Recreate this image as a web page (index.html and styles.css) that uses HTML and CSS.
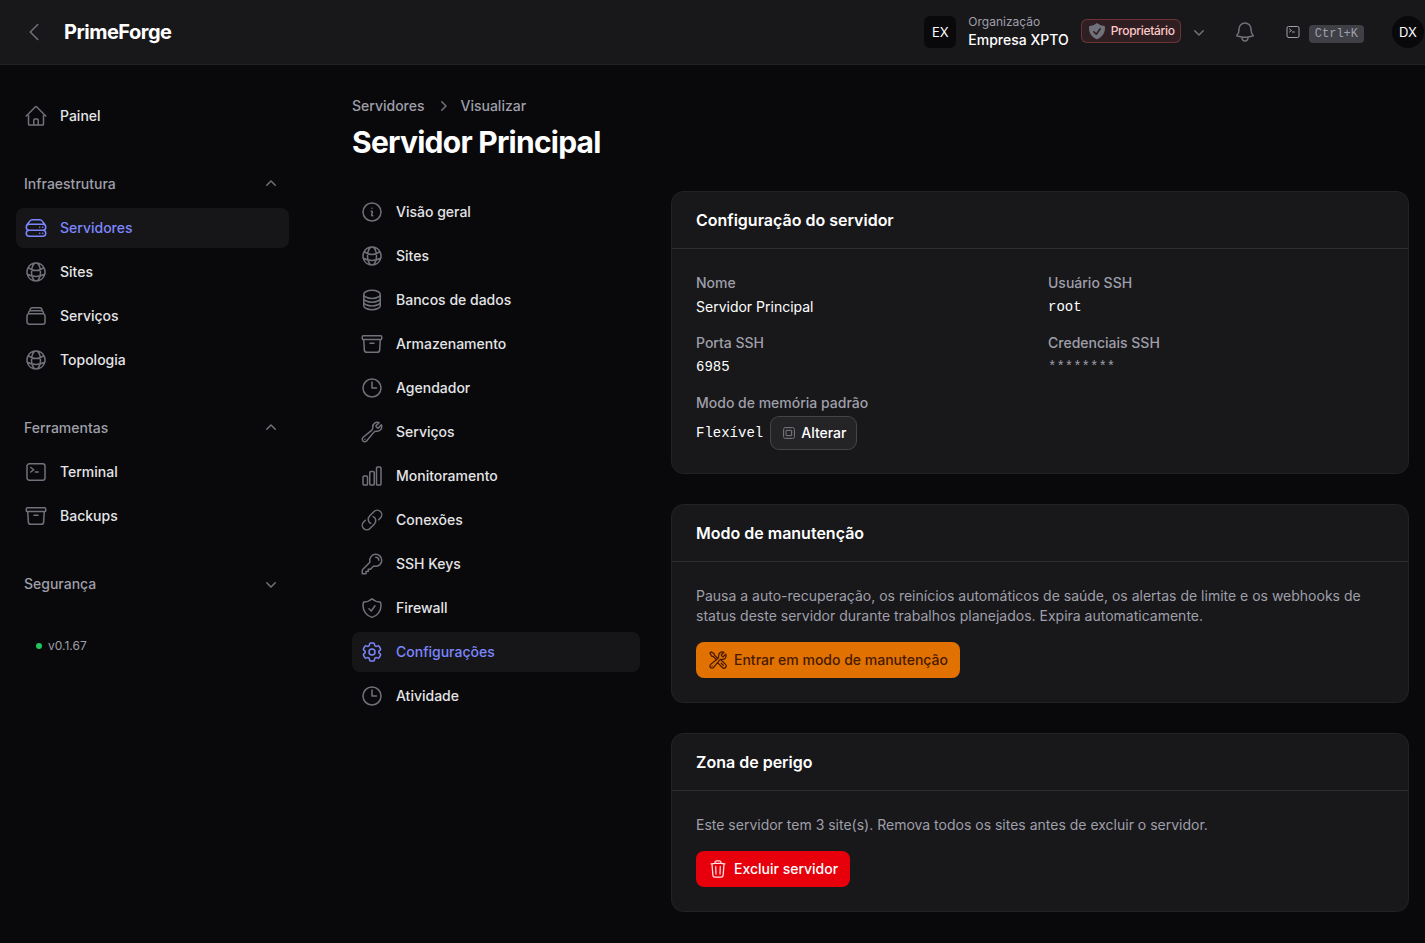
FILE: index.html
```html
<!DOCTYPE html>
<html lang="pt-BR">
  <head>
    <meta charset="utf-8">
    <title>Servidor Principal - PrimeForge</title>
    <link rel="stylesheet" href="styles.css">
  </head>
  <body>

    <!-- icons -->
    <svg class="sprite" xmlns="http://www.w3.org/2000/svg">
      <symbol id="back" viewBox="0 0 24 24"><path d="M15.75 19.5 8.25 12l7.5-7.5"/></symbol>
      <symbol id="home" viewBox="0 0 24 24"><path d="m2.25 12 8.954-8.955c.44-.439 1.152-.439 1.591 0L21.75 12M4.5 9.75v10.125c0 .621.504 1.125 1.125 1.125H9.75v-4.875c0-.621.504-1.125 1.125-1.125h2.25c.621 0 1.125.504 1.125 1.125V21h4.125c.621 0 1.125-.504 1.125-1.125V9.75M8.25 21h8.25"/></symbol>
      <symbol id="server" viewBox="0 0 24 24"><path d="M5.25 14.25h13.5m-13.5 0a3 3 0 0 1-3-3m3 3a3 3 0 1 0 0 6h13.5a3 3 0 1 0 0-6m-16.5-3a3 3 0 0 1 3-3h13.5a3 3 0 0 1 3 3m-19.5 0a4.5 4.5 0 0 1 .9-2.7L5.737 5.1a3.375 3.375 0 0 1 2.7-1.35h7.126c1.062 0 2.062.5 2.7 1.35l2.587 3.45a4.5 4.5 0 0 1 .9 2.7m0 0a3 3 0 0 1-3 3m0 3h.008v.008h-.008v-.008Zm0-6h.008v.008h-.008v-.008Zm-3 6h.008v.008h-.008v-.008Zm0-6h.008v.008h-.008v-.008Z"/></symbol>
      <symbol id="globe" viewBox="0 0 24 24"><path d="M12 21a9.004 9.004 0 0 0 8.716-6.747M12 21a9.004 9.004 0 0 1-8.716-6.747M12 21c2.485 0 4.5-4.03 4.5-9S14.485 3 12 3m0 18c-2.485 0-4.5-4.03-4.5-9S9.515 3 12 3m0 0a8.997 8.997 0 0 1 7.843 4.582M12 3a8.997 8.997 0 0 0-7.843 4.582m15.686 0A11.953 11.953 0 0 1 12 10.5c-2.998 0-5.74-1.1-7.843-2.918m15.686 0A8.959 8.959 0 0 1 21 12c0 .778-.099 1.533-.284 2.253m0 0A17.919 17.919 0 0 1 12 16.5c-3.162 0-6.133-.815-8.716-2.247m0 0A9.015 9.015 0 0 1 3 12c0-1.605.42-3.113 1.157-4.418"/></symbol>
      <symbol id="stack" viewBox="0 0 24 24"><path d="M6 6.878V6a2.25 2.25 0 0 1 2.25-2.25h7.5A2.25 2.25 0 0 1 18 6v.878m-12 0c.235-.083.487-.128.75-.128h10.5c.263 0 .515.045.75.128m-12 0A2.25 2.25 0 0 0 4.5 9v.878m13.5-3A2.25 2.25 0 0 1 19.5 9v.878m0 0a2.246 2.246 0 0 0-.75-.128H5.25c-.263 0-.515.045-.75.128m15 0A2.25 2.25 0 0 1 21 12v6a2.25 2.25 0 0 1-2.25 2.25H5.25A2.25 2.25 0 0 1 3 18v-6c0-.98.626-1.813 1.5-2.122"/></symbol>
      <symbol id="terminal" viewBox="0 0 24 24"><path d="m6.75 7.5 3 2.25-3 2.25m4.5 0h3m-9 8.25h13.5A2.25 2.25 0 0 0 21 18V6a2.25 2.25 0 0 0-2.25-2.25H5.25A2.25 2.25 0 0 0 3 6v12a2.25 2.25 0 0 0 2.25 2.25Z"/></symbol>
      <symbol id="archive" viewBox="0 0 24 24"><path d="m20.25 7.5-.625 10.632a2.25 2.25 0 0 1-2.247 2.118H6.622a2.25 2.25 0 0 1-2.247-2.118L3.75 7.5M10 11.25h4M3.375 7.5h17.25c.621 0 1.125-.504 1.125-1.125v-1.5c0-.621-.504-1.125-1.125-1.125H3.375c-.621 0-1.125.504-1.125 1.125v1.5c0 .621.504 1.125 1.125 1.125Z"/></symbol>
      <symbol id="info" viewBox="0 0 24 24"><path d="m11.25 11.25.041-.02a.75.75 0 0 1 1.063.852l-.708 2.836a.75.75 0 0 0 1.063.853l.041-.021M21 12a9 9 0 1 1-18 0 9 9 0 0 1 18 0Zm-9-3.75h.008v.008H12V8.25Z"/></symbol>
      <symbol id="database" viewBox="0 0 24 24"><path d="M20.25 6.375c0 2.278-3.694 4.125-8.25 4.125S3.75 8.653 3.75 6.375m16.5 0c0-2.278-3.694-4.125-8.25-4.125S3.75 4.097 3.75 6.375m16.5 0v11.25c0 2.278-3.694 4.125-8.25 4.125s-8.25-1.847-8.25-4.125V6.375m16.5 0v3.75m-16.5-3.75v3.75m16.5 0v3.75C20.25 16.153 16.556 18 12 18s-8.25-1.847-8.25-4.125v-3.75m16.5 0c0 2.278-3.694 4.125-8.25 4.125s-8.25-1.847-8.25-4.125"/></symbol>
      <symbol id="clock" viewBox="0 0 24 24"><path d="M12 6v6h4.5m4.5 0a9 9 0 1 1-18 0 9 9 0 0 1 18 0Z"/></symbol>
      <symbol id="wrench" viewBox="0 0 24 24"><path d="M21.75 6.75a4.5 4.5 0 0 1-4.884 4.484c-1.076-.091-2.264.071-2.95.904l-7.152 8.684a2.548 2.548 0 1 1-3.586-3.586l8.684-7.152c.833-.686.995-1.874.904-2.95a4.5 4.5 0 0 1 6.336-4.486l-3.276 3.276a3.004 3.004 0 0 0 2.25 2.25l3.276-3.276c.256.565.398 1.192.398 1.852Z"/><path d="M4.867 19.125h.008v.008h-.008v-.008Z"/></symbol>
      <symbol id="chart" viewBox="0 0 24 24"><path d="M3 13.125C3 12.504 3.504 12 4.125 12h2.25c.621 0 1.125.504 1.125 1.125v6.75C7.5 20.496 6.996 21 6.375 21h-2.25A1.125 1.125 0 0 1 3 19.875v-6.75ZM9.75 8.625c0-.621.504-1.125 1.125-1.125h2.25c.621 0 1.125.504 1.125 1.125v11.25c0 .621-.504 1.125-1.125 1.125h-2.25a1.125 1.125 0 0 1-1.125-1.125V8.625ZM16.5 4.125c0-.621.504-1.125 1.125-1.125h2.25C20.496 3 21 3.504 21 4.125v15.75c0 .621-.504 1.125-1.125 1.125h-2.25a1.125 1.125 0 0 1-1.125-1.125V4.125Z"/></symbol>
      <symbol id="link" viewBox="0 0 24 24"><path d="M13.19 8.688a4.5 4.5 0 0 1 1.242 7.244l-4.5 4.5a4.5 4.5 0 0 1-6.364-6.364l1.757-1.757m13.35-.622 1.757-1.757a4.5 4.5 0 0 0-6.364-6.364l-4.5 4.5a4.5 4.5 0 0 0 1.242 7.244"/></symbol>
      <symbol id="key" viewBox="0 0 24 24"><path d="M15.75 5.25a3 3 0 0 1 3 3m3 0a6 6 0 0 1-7.029 5.912c-.563-.097-1.159.026-1.563.43L10.5 17.25H8.25v2.25H6v2.25H2.25v-2.818c0-.597.237-1.17.659-1.591l6.499-6.499c.404-.404.527-1 .43-1.563A6 6 0 1 1 21.75 8.25Z"/></symbol>
      <symbol id="shield" viewBox="0 0 24 24"><path d="M9 12.75 11.25 15 15 9.75m-3-7.036A11.959 11.959 0 0 1 3.598 6 11.99 11.99 0 0 0 3 9.749c0 5.592 3.824 10.29 9 11.623 5.176-1.332 9-6.03 9-11.622 0-1.31-.21-2.571-.598-3.751h-.152c-3.196 0-6.1-1.248-8.25-3.285Z"/></symbol>
      <symbol id="cog" viewBox="0 0 24 24"><path d="M9.594 3.94c.09-.542.56-.94 1.11-.94h2.593c.55 0 1.02.398 1.11.94l.213 1.281c.063.374.313.686.645.87.074.04.147.083.22.127.325.196.72.257 1.075.124l1.217-.456a1.125 1.125 0 0 1 1.37.49l1.296 2.247a1.125 1.125 0 0 1-.26 1.431l-1.003.827c-.293.241-.438.613-.43.992a7.723 7.723 0 0 1 0 .255c-.008.378.137.75.43.991l1.004.827c.424.35.534.955.26 1.43l-1.298 2.247a1.125 1.125 0 0 1-1.369.491l-1.217-.456c-.355-.133-.75-.072-1.076.124a6.47 6.47 0 0 1-.22.128c-.331.183-.581.495-.644.869l-.213 1.281c-.09.543-.56.94-1.11.94h-2.594c-.55 0-1.019-.398-1.11-.94l-.213-1.281c-.062-.374-.312-.686-.644-.87a6.52 6.52 0 0 1-.22-.127c-.325-.196-.72-.257-1.076-.124l-1.217.456a1.125 1.125 0 0 1-1.369-.49l-1.297-2.247a1.125 1.125 0 0 1 .26-1.431l1.004-.827c.292-.24.437-.613.43-.991a6.932 6.932 0 0 1 0-.255c.007-.38-.138-.751-.43-.992l-1.004-.827a1.125 1.125 0 0 1-.26-1.43l1.297-2.247a1.125 1.125 0 0 1 1.37-.491l1.216.456c.356.133.751.072 1.076-.124.072-.044.146-.086.22-.128.332-.183.582-.495.644-.869l.214-1.28Z"/><path d="M15 12a3 3 0 1 1-6 0 3 3 0 0 1 6 0Z"/></symbol>
      <symbol id="bell" viewBox="0 0 24 24"><path d="M14.857 17.082a23.848 23.848 0 0 0 5.454-1.31A8.967 8.967 0 0 1 18 9.75V9A6 6 0 0 0 6 9v.75a8.967 8.967 0 0 1-2.312 6.022c1.733.64 3.56 1.085 5.455 1.31m5.714 0a24.255 24.255 0 0 1-5.714 0m5.714 0a3 3 0 1 1-5.714 0"/></symbol>
      <symbol id="tools" viewBox="0 0 24 24"><path d="M11.42 15.17 17.25 21A2.652 2.652 0 0 0 21 17.25l-5.877-5.877M11.42 15.17l2.496-3.03c.317-.384.74-.626 1.208-.766M11.42 15.17l-4.655 5.653a2.548 2.548 0 1 1-3.586-3.586l6.837-5.63m5.108-.233c.55-.164 1.163-.188 1.743-.14a4.5 4.5 0 0 0 4.486-6.336l-3.276 3.277a3.004 3.004 0 0 1-2.25-2.25l3.276-3.276a4.5 4.5 0 0 0-6.336 4.486c.091 1.076-.071 2.264-.904 2.95l-.102.085m-1.745 1.437L5.909 7.5H4.5L2.25 3.75l1.5-1.5L7.5 4.5v1.409l4.26 4.26m-1.745 1.437 1.745-1.437m6.615 8.206L15.75 15.75M4.867 19.125h.008v.008h-.008v-.008Z"/></symbol>
      <symbol id="trash" viewBox="0 0 24 24"><path d="m14.74 9-.346 9m-4.788 0L9.26 9m9.968-3.21c.342.052.682.107 1.022.166m-1.022-.165L18.16 19.673a2.25 2.25 0 0 1-2.244 2.077H8.084a2.25 2.25 0 0 1-2.244-2.077L4.772 5.79m14.456 0a48.108 48.108 0 0 0-3.478-.397m-12 .562c.34-.059.68-.114 1.022-.165m0 0a48.11 48.11 0 0 1 3.478-.397m7.5 0v-.916c0-1.18-.91-2.164-2.09-2.201a51.964 51.964 0 0 0-3.32 0c-1.18.037-2.09 1.022-2.09 2.201v.916m7.5 0a48.667 48.667 0 0 0-7.5 0"/></symbol>
      <symbol id="chip" viewBox="0 0 24 24"><rect x="3.75" y="3.75" width="16.5" height="16.5" rx="3"/><rect x="8.25" y="8.25" width="7.5" height="7.5"/><path stroke-width="1" d="M9 4v3M12 4v3M15 4v3M9 17v3M12 17v3M15 17v3M4 9h3M4 12h3M4 15h3M17 9h3M17 12h3M17 15h3" opacity=".45"/></symbol>
      <symbol id="shield-solid" viewBox="0 0 20 20"><path fill-rule="evenodd" d="M9.661 2.237a.531.531 0 0 1 .678 0 11.947 11.947 0 0 0 7.078 2.749.5.5 0 0 1 .479.425c.069.52.104 1.05.104 1.59 0 5.162-3.26 9.563-7.834 11.256a.48.48 0 0 1-.332 0C5.26 16.564 2 12.163 2 7c0-.538.035-1.069.104-1.589a.5.5 0 0 1 .48-.425 11.947 11.947 0 0 0 7.077-2.75Zm4.196 5.954a.75.75 0 0 0-1.214-.882l-3.483 4.79-1.88-1.88a.75.75 0 1 0-1.06 1.061l2.5 2.5a.75.75 0 0 0 1.137-.089l4-5.5Z"/></symbol>
      <symbol id="up" viewBox="0 0 20 20"><path d="M9.47 6.47a.75.75 0 0 1 1.06 0l4.25 4.25a.75.75 0 1 1-1.06 1.06L10 8.06l-3.72 3.72a.75.75 0 0 1-1.06-1.06l4.25-4.25Z"/></symbol>
      <symbol id="down" viewBox="0 0 20 20"><path d="M5.22 8.22a.75.75 0 0 1 1.06 0L10 11.94l3.72-3.72a.75.75 0 1 1 1.06 1.06l-4.25 4.25a.75.75 0 0 1-1.06 0L5.22 9.28a.75.75 0 0 1 0-1.06Z"/></symbol>
      <symbol id="right" viewBox="0 0 20 20"><path d="M8.22 5.22a.75.75 0 0 1 1.06 0l4.25 4.25a.75.75 0 0 1 0 1.06l-4.25 4.25a.75.75 0 0 1-1.06-1.06L11.94 10 8.22 6.28a.75.75 0 0 1 0-1.06Z"/></symbol>
    </svg>

    <header class="topbar">
      <svg class="icon back"><use href="#back"/></svg>
      <a class="brand" href="#">PrimeForge</a>

      <div class="topbar-end">
        <div class="org">
          <span class="avatar">EX</span>
          <div class="org-text">
            <span class="org-label">Organização</span>
            <span class="org-name">Empresa XPTO</span>
          </div>
          <span class="badge"><svg class="icon-solid"><use href="#shield-solid"/></svg>Proprietário</span>
          <svg class="icon-solid org-arrow"><use href="#down"/></svg>
        </div>
        <svg class="icon bell"><use href="#bell"/></svg>
        <div class="shortcut">
          <svg class="icon"><use href="#terminal"/></svg>
          <kbd>Ctrl+K</kbd>
        </div>
        <span class="avatar avatar-user">DX</span>
      </div>
    </header>

    <div class="layout">
      <nav class="sidebar">
        <ul class="menu">
          <li><a class="item" href="#"><svg class="icon"><use href="#home"/></svg>Painel</a></li>
        </ul>

        <ul class="menu">
          <li class="group">Infraestrutura<svg class="icon-solid"><use href="#up"/></svg></li>
          <li><a class="item active" href="#"><svg class="icon"><use href="#server"/></svg>Servidores</a></li>
          <li><a class="item" href="#"><svg class="icon"><use href="#globe"/></svg>Sites</a></li>
          <li><a class="item" href="#"><svg class="icon"><use href="#stack"/></svg>Serviços</a></li>
          <li><a class="item" href="#"><svg class="icon"><use href="#globe"/></svg>Topologia</a></li>
        </ul>

        <ul class="menu">
          <li class="group">Ferramentas<svg class="icon-solid"><use href="#up"/></svg></li>
          <li><a class="item" href="#"><svg class="icon"><use href="#terminal"/></svg>Terminal</a></li>
          <li><a class="item" href="#"><svg class="icon"><use href="#archive"/></svg>Backups</a></li>
        </ul>

        <ul class="menu">
          <li class="group">Segurança<svg class="icon-solid"><use href="#down"/></svg></li>
        </ul>

        <div class="version"><span class="dot"></span>v0.1.67</div>
      </nav>

      <main class="main">
        <div class="breadcrumbs">
          <a href="#">Servidores</a>
          <svg class="icon-solid"><use href="#right"/></svg>
          <a href="#">Visualizar</a>
        </div>
        <h1>Servidor Principal</h1>

        <div class="content">
          <ul class="menu subnav">
            <li><a class="item" href="#"><svg class="icon"><use href="#info"/></svg>Visão geral</a></li>
            <li><a class="item" href="#"><svg class="icon"><use href="#globe"/></svg>Sites</a></li>
            <li><a class="item" href="#"><svg class="icon"><use href="#database"/></svg>Bancos de dados</a></li>
            <li><a class="item" href="#"><svg class="icon"><use href="#archive"/></svg>Armazenamento</a></li>
            <li><a class="item" href="#"><svg class="icon"><use href="#clock"/></svg>Agendador</a></li>
            <li><a class="item" href="#"><svg class="icon"><use href="#wrench"/></svg>Serviços</a></li>
            <li><a class="item" href="#"><svg class="icon"><use href="#chart"/></svg>Monitoramento</a></li>
            <li><a class="item" href="#"><svg class="icon"><use href="#link"/></svg>Conexões</a></li>
            <li><a class="item" href="#"><svg class="icon"><use href="#key"/></svg>SSH Keys</a></li>
            <li><a class="item" href="#"><svg class="icon"><use href="#shield"/></svg>Firewall</a></li>
            <li><a class="item active" href="#"><svg class="icon"><use href="#cog"/></svg>Configurações</a></li>
            <li><a class="item" href="#"><svg class="icon"><use href="#clock"/></svg>Atividade</a></li>
          </ul>

          <div class="cards">
            <section class="card">
              <h2>Configuração do servidor</h2>
              <dl class="card-body fields">
                <div>
                  <dt>Nome</dt>
                  <dd>Servidor Principal</dd>
                </div>
                <div>
                  <dt>Usuário SSH</dt>
                  <dd class="mono">root</dd>
                </div>
                <div>
                  <dt>Porta SSH</dt>
                  <dd class="mono">6985</dd>
                </div>
                <div>
                  <dt>Credenciais SSH</dt>
                  <dd class="mono muted">********</dd>
                </div>
                <div>
                  <dt>Modo de memória padrão</dt>
                  <dd class="mono memory">Flexível <button class="btn btn-gray"><svg class="icon"><use href="#chip"/></svg>Alterar</button></dd>
                </div>
              </dl>
            </section>

            <section class="card">
              <h2>Modo de manutenção</h2>
              <div class="card-body">
                <p>Pausa a auto-recuperação, os reinícios automáticos de saúde, os alertas de limite e os webhooks de status deste servidor durante trabalhos planejados. Expira automaticamente.</p>
                <button class="btn btn-warning"><svg class="icon"><use href="#tools"/></svg>Entrar em modo de manutenção</button>
              </div>
            </section>

            <section class="card">
              <h2>Zona de perigo</h2>
              <div class="card-body">
                <p>Este servidor tem 3 site(s). Remova todos os sites antes de excluir o servidor.</p>
                <button class="btn btn-danger"><svg class="icon"><use href="#trash"/></svg>Excluir servidor</button>
              </div>
            </section>
          </div>
        </div>
      </main>
    </div>
  </body>
</html>
```

FILE: styles.css
```css
* {
  box-sizing: border-box;
}

body {
  margin: 0;
  min-height: 100vh;
  background-color: #09090b;
  color: #fff;
  font-family: Inter, sans-serif;
  font-size: 14px;
  line-height: 20px;
}

a {
  color: inherit;
  text-decoration: none;
}

ul, dl, dd, p, h1, h2 {
  margin: 0;
  padding: 0;
}

ul {
  list-style: none;
}

.sprite {
  display: none;
}

.icon {
  flex-shrink: 0;
  width: 24px;
  height: 24px;
  fill: none;
  stroke: #71717b;
  stroke-width: 1.5;
  stroke-linecap: round;
  stroke-linejoin: round;
}

.icon-solid {
  flex-shrink: 0;
  width: 20px;
  height: 20px;
  fill: #71717b;
}

/* topbar */
.topbar {
  display: flex;
  align-items: center;
  height: 64px;
  padding: 0 1px 0 22px;
  background-color: #18181b;
  box-shadow: 0 1px 0 #222224;
}

.brand {
  margin-left: 18px;
  font-size: 20px;
  font-weight: 700;
  letter-spacing: -0.5px;
}

.topbar-end {
  display: flex;
  align-items: center;
  margin-left: auto;
}

.org {
  display: flex;
  align-items: center;
}

.avatar {
  display: flex;
  align-items: center;
  justify-content: center;
  width: 32px;
  height: 32px;
  border-radius: 6px;
  background-color: #09090b;
  font-size: 13px;
}

.avatar-user {
  margin-left: 28px;
  border-radius: 50%;
}

.org-text {
  display: flex;
  flex-direction: column;
  margin: 0 12px;
  font-weight: 500;
}

.org-label {
  color: #9f9fa9;
  font-size: 12px;
  line-height: 16px;
  font-weight: 400;
}

.badge {
  display: flex;
  align-items: center;
  gap: 4px;
  height: 24px;
  margin-bottom: 2px;
  padding: 0 6px;
  border-radius: 6px;
  background-color: rgba(255, 100, 103, 0.1);
  box-shadow: inset 0 0 0 1px rgba(255, 100, 103, 0.3);
  color: #ffc9c9;
  font-size: 12px;
  font-weight: 500;
  letter-spacing: -0.3px;
}

.org-arrow {
  margin-left: 8px;
}

.bell {
  margin-left: 24px;
}

.shortcut {
  display: flex;
  align-items: center;
  gap: 8px;
  margin-left: 28px;
}

.shortcut .icon {
  width: 16px;
  height: 16px;
  stroke: #9f9fa9;
}

kbd {
  height: 18px;
  margin-top: 4px;
  padding: 0 6px;
  border-radius: 4px;
  background-color: #3f3f46;
  color: #9f9fa9;
  font-family: "Liberation Mono", monospace;
  font-size: 12px;
  line-height: 18px;
}

/* sidebar */
.layout {
  display: flex;
}

.sidebar {
  display: flex;
  flex-direction: column;
  gap: 28px;
  width: 320px;
  padding: 32px 31px 32px 16px;
}

.menu {
  display: flex;
  flex-direction: column;
  gap: 4px;
}

.item,
.group {
  display: flex;
  align-items: center;
  height: 40px;
  padding: 8px;
  border-radius: 8px;
  font-weight: 500;
}

.item {
  gap: 12px;
  color: #e4e4e7;
}

.item.active {
  background-color: #161618;
  color: #7c86ff;
}

.item.active .icon {
  stroke: #7c86ff;
}

.group {
  justify-content: space-between;
  color: #9f9fa9;
}

.version {
  display: flex;
  align-items: center;
  gap: 6px;
  margin-top: 4px;
  padding-left: 20px;
  color: #9f9fa9;
  font-size: 12px;
}

.dot {
  width: 6px;
  height: 6px;
  border-radius: 50%;
  background-color: #22c55e;
}

/* page */
.main {
  flex: 1;
  padding: 32px 17px 32px 32px;
}

.breadcrumbs {
  display: flex;
  align-items: center;
  gap: 8px;
  color: #9f9fa9;
  font-weight: 500;
}

h1 {
  margin-top: 8px;
  font-size: 30px;
  line-height: 36px;
  font-weight: 700;
  letter-spacing: -0.75px;
}

.content {
  display: grid;
  grid-template-columns: 288px 1fr;
  gap: 32px;
  align-items: start;
  margin-top: 32px;
}

.cards {
  display: grid;
  gap: 32px;
}

.card {
  border-radius: 12px;
  background-color: #18181b;
  box-shadow: 0 0 0 1px #222224;
}

h2 {
  padding: 16px 24px;
  font-size: 16px;
  line-height: 24px;
  font-weight: 600;
}

.card-body {
  padding: 24px;
  border-top: 1px solid #2f2f32;
}

.card-body p {
  margin-bottom: 16px;
  color: #9f9fa9;
}

.fields {
  display: grid;
  grid-template-columns: 1fr 1fr;
  gap: 16px;
}

dt {
  color: #9f9fa9;
  font-weight: 500;
}

dd {
  margin-top: 4px;
}

.mono {
  font-family: "Liberation Mono", monospace;
}

.muted {
  color: #9f9fa9;
}

.memory {
  display: flex;
  align-items: center;
  gap: 8px;
}

.btn {
  display: flex;
  align-items: center;
  gap: 6px;
  height: 36px;
  padding: 0 12px;
  border: none;
  border-radius: 8px;
  font-family: Inter, sans-serif;
  font-size: 14px;
  font-weight: 500;
  line-height: 20px;
}

.btn .icon {
  width: 20px;
  height: 20px;
}

.btn-gray {
  gap: 4px;
  height: 32px;
  padding: 0 10px;
  background-color: #242427;
  box-shadow: 0 0 0 1px #454548;
  color: #fff;
}

.btn-gray .icon {
  width: 16px;
  height: 16px;
}

.btn-warning {
  background-color: #e17100;
  color: #461901;
}

.btn-warning .icon {
  stroke: #461901;
}

.btn-danger {
  background-color: #e7000b;
  color: #fff;
}

.btn-danger .icon {
  stroke: #ffe2e2;
}
```
